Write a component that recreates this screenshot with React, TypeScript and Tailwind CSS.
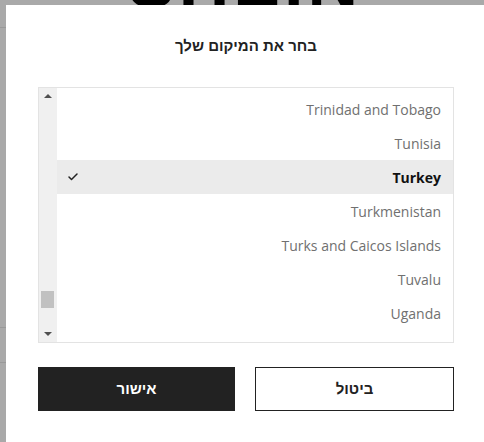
import { Check } from 'lucide-react'

const countries = [
  'Trinidad and Tobago',
  'Tunisia',
  'Turkey',
  'Turkmenistan',
  'Turks and Caicos Islands',
  'Tuvalu',
  'Uganda',
]

const selected = 'Turkey'

function ScrollBar() {
  return (
    <div className="flex w-[18px] shrink-0 flex-col items-center bg-[#f0f0f0]">
      <div className="mt-[6px] h-0 w-0 border-x-[4px] border-b-[4px] border-x-transparent border-b-[#505050]" />
      <div className="flex-1" />
      <div className="mr-[1px] h-[17px] w-[13px] bg-[#c1c1c1]" />
      <div className="h-[24px]" />
      <div className="mb-[6px] h-0 w-0 border-x-[4px] border-t-[4px] border-x-transparent border-t-[#505050]" />
    </div>
  )
}

export default function App() {
  return (
    <div className="relative h-[442px] w-[484px] overflow-hidden bg-[#a9a9a9]">
      {/* page behind the overlay */}
      <div className="absolute left-[128px] top-[-52px] font-['Liberation_Sans',sans-serif] text-[70px] font-bold leading-none tracking-[4px] text-black">
        SHEIN
      </div>
      <div className="absolute left-0 top-[27px] h-px w-[6px] bg-[#999]" />
      <div className="absolute left-0 top-[327px] h-px w-[6px] bg-[#999]" />
      <div className="absolute left-0 top-[362px] h-px w-[6px] bg-[#999]" />

      <div
        dir="rtl"
        className="absolute left-[6px] top-[5px] h-[437px] w-[478px] bg-white pl-[32px] pr-[30px] pt-[32px]"
      >
        <h2 className="text-center font-['Liberation_Sans',sans-serif] text-[15px] font-bold leading-[18px] text-[#222]">
          בחר את המיקום שלך
        </h2>

        <div className="mt-[32px] flex h-[256px] border border-[#e3e3e3]">
          <div className="flex-1 pt-[4px]">
            {countries.map((c) => {
              const active = c === selected
              return (
                <div
                  key={c}
                  className={`flex h-[34px] items-center justify-between pr-[12px] pl-[10px] font-['Open_Sans',sans-serif] text-[14px] ${
                    active ? 'bg-[#ebebeb] font-bold text-[#111]' : 'text-[#707070]'
                  }`}
                >
                  <span>{c}</span>
                  {active && <Check size={12} strokeWidth={3} className="text-[#222]" />}
                </div>
              )
            })}
          </div>
          <ScrollBar />
        </div>

        <div className="mt-[24px] flex gap-[20px] font-['Liberation_Sans',sans-serif] text-[15px] font-bold">
          <button className="h-[44px] flex-1 border border-[#222] bg-white text-[#222]">ביטול</button>
          <button className="h-[44px] flex-1 bg-[#222] text-white">אישור</button>
        </div>
      </div>
    </div>
  )
}
